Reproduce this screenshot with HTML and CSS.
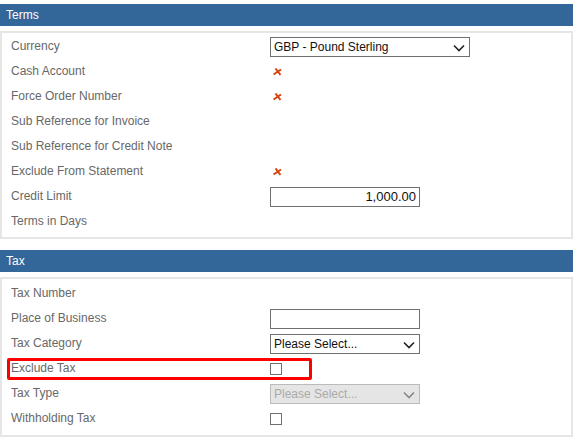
FILE: index.html
```html
<!DOCTYPE html>
<html lang="en">
<head>
  <meta charset="UTF-8">
  <title>Account Settings</title>
  <link rel="stylesheet" href="styles.css">
</head>
<body>
  <section class="group">
    <h2 class="group-head">Terms</h2>
    <div class="panel panel-terms">
      <div class="row">
        <label class="lbl">Currency</label>
        <span class="sel sel-wide">
          <span class="sel-text">GBP - Pound Sterling</span>
          <svg class="chev" width="12" height="8" viewBox="0 0 12 8"><path d="M1 1.5 L6 6.5 L11 1.5" fill="none" stroke="#222" stroke-width="1.6"/></svg>
        </span>
      </div>
      <div class="row">
        <label class="lbl">Cash Account</label>
        <svg class="cross" width="9" height="8" viewBox="0 0 9 8"><path d="M2.5 0.5 L7.5 7 M8 1.5 L0.5 6.5" stroke="#d9420c" stroke-width="2"/></svg>
      </div>
      <div class="row">
        <label class="lbl">Force Order Number</label>
        <svg class="cross" width="9" height="8" viewBox="0 0 9 8"><path d="M2.5 0.5 L7.5 7 M8 1.5 L0.5 6.5" stroke="#d9420c" stroke-width="2"/></svg>
      </div>
      <div class="row"><label class="lbl">Sub Reference for Invoice</label></div>
      <div class="row"><label class="lbl">Sub Reference for Credit Note</label></div>
      <div class="row">
        <label class="lbl">Exclude From Statement</label>
        <svg class="cross" width="9" height="8" viewBox="0 0 9 8"><path d="M2.5 0.5 L7.5 7 M8 1.5 L0.5 6.5" stroke="#d9420c" stroke-width="2"/></svg>
      </div>
      <div class="row">
        <label class="lbl">Credit Limit</label>
        <span class="field num">1,000.00</span>
      </div>
      <div class="row"><label class="lbl">Terms in Days</label></div>
    </div>
  </section>

  <section class="group">
    <h2 class="group-head">Tax</h2>
    <div class="panel panel-tax">
      <div class="row"><label class="lbl">Tax Number</label></div>
      <div class="row">
        <label class="lbl">Place of Business</label>
        <span class="field"></span>
      </div>
      <div class="row">
        <label class="lbl">Tax Category</label>
        <span class="sel">
          <span class="sel-text">Please Select...</span>
          <svg class="chev" width="12" height="8" viewBox="0 0 12 8"><path d="M1 1.5 L6 6.5 L11 1.5" fill="none" stroke="#222" stroke-width="1.6"/></svg>
        </span>
      </div>
      <div class="row">
        <label class="lbl">Exclude Tax</label>
        <span class="check"></span>
        <span class="highlight"></span>
      </div>
      <div class="row">
        <label class="lbl">Tax Type</label>
        <span class="sel sel-off">
          <span class="sel-text">Please Select...</span>
          <svg class="chev" width="12" height="8" viewBox="0 0 12 8"><path d="M1 1.5 L6 6.5 L11 1.5" fill="none" stroke="#888" stroke-width="1.6"/></svg>
        </span>
      </div>
      <div class="row">
        <label class="lbl">Withholding Tax</label>
        <span class="check"></span>
      </div>
    </div>
  </section>
</body>
</html>
```

FILE: styles.css
```css
body { margin:4px 8px 0 0; background:#fff; font-family:"Liberation Sans", Arial, sans-serif; font-size:12px; color:#686868; }
.group { margin-bottom:11px; }
.group-head { margin:0 0 5px; height:22px; line-height:22px; padding-left:6px; background:#336699; color:#fff; font-size:12px; font-weight:normal; }
.panel { border:2px solid #e6e6e6; }
.panel-terms { padding:1px 0 3px; }
.panel-tax { padding:2px 0 4px; }
.row { position:relative; display:grid; grid-template-columns:268px 1fr; align-items:center; height:25px; }
.lbl { padding-left:9px; line-height:25px; }
.sel { position:relative; display:flex; align-items:center; box-sizing:border-box; width:150px; height:20px; border:1px solid #707070; background:#fff; color:#111; font-size:12px; padding-left:3px; }
.sel-wide { width:200px; }
.sel-text { flex:1; }
.chev { position:absolute; right:4px; top:6px; }
.sel-off { background:#e5e5e5; border-color:#bbb; color:#aaa; }
.field { box-sizing:border-box; width:150px; height:20px; border:1px solid #707070; background:#fff; color:#111; font-size:13px; line-height:18px; padding:0 3px; }
.num { text-align:right; }
.cross { margin-left:3px; }
.check { box-sizing:border-box; width:12px; height:12px; border:1px solid #707070; background:#fff; }
.highlight { position:absolute; left:5px; top:2px; width:305px; height:22px; box-sizing:border-box; border:3px solid #f00; border-radius:2px; }
```
